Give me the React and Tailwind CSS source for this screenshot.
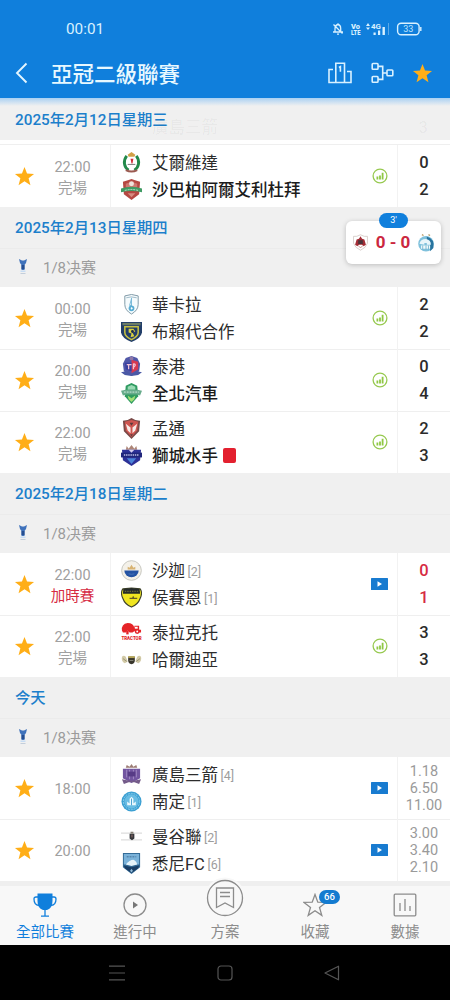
import clsx from "clsx";

const STAR = "M12 1.2l2.9 7.5 8 .4-6.2 5 2.1 7.8-6.8-4.4-6.8 4.4 2.1-7.8-6.2-5 8-.4z";

const crests = {
  alwehdat: (
    <>
      <path d="M7 3h8l3 3v9l-3 4H7l-3-4V6z" fill="#fff" />
      <path d="M6 4C2 9 3 16 8 19M16 4c4 5 3 12-2 15" stroke="#22894a" strokeWidth="3" fill="none" />
      <path d="M7 3l4-3 4 3-1 2H8z" fill="#d2a047" />
      <path d="M10 7h3l-1 5h-1z" fill="#d02c38" />
      <path d="M7 13h8" stroke="#777" />
      <path d="M5 19q6 3 12 0" stroke="#9b5a50" strokeWidth="2" fill="none" />
    </>
  ),
  shabab: (
    <>
      <path d="M2 3l6-2 3-1 3 1 6 2-1 13-8 6-8-6z" fill="#b54842" />
      <path d="M5 5l6-2 6 2v4H5z" fill="#cf7770" />
      <circle cx="11" cy="5" r="2.6" fill="#f0e2dc" />
      <path d="M0 10q11-4 22 0v4q-11-3-22 0z" fill="#3f9b63" />
      <path d="M4 12q7-2 14 0" stroke="#c7e4cf" strokeDasharray="2 1" fill="none" />
      <path d="M7 15h8l-4 4z" fill="#d88a80" />
    </>
  ),
  wakrah: (
    <>
      <path d="M4 2Q11-1 18 2v9q0 6-7 10Q4 17 4 11z" fill="#f5fbfd" stroke="#7d97a5" />
      <path d="M5.5 4q5-2 11 0" stroke="#9eb9c6" fill="none" />
      <path d="M11 4v9M11 5L9 12h2" stroke="#76b8d8" fill="none" />
      <circle cx="11" cy="15" r="3" fill="#58add4" />
      <path d="M10 15l1-1.500 1.500 1.500-1.500 1.500z" fill="#fff" />
    </>
  ),
  buriram: (
    <>
      <path d="M0 1h22v11q-1 6-11 10Q1 18 0 12z" fill="#223e69" />
      <path d="M1.5 2h19v2.5h-19z" fill="#6d7d65" />
      <path d="M4 6h14v6q0 4-7 7.500Q4 16 4 12z" fill="none" stroke="#c6c043" strokeWidth="1.600" />
      <path d="M8 8l5 0 2 3-3 1 2 4-4 1 1-4-3-1z" fill="#d9d140" />
      <circle cx="12" cy="11" r="1.500" fill="#182b4a" />
    </>
  ),
  port: (
    <>
      <path d="M5 2l6-2 6 2 3 6-1 8-8 5-8-5-1-8z" fill="#5158a8" />
      <path d="M11 4l7 2v8l-7 4z" fill="#d73950" />
      <path d="M4 7h7v9l-6-2z" fill="#3b3f9f" />
      <path d="M6 9h5M8 9v5M13 8v6M13 8q4 1 0 4" stroke="#f1c5d7" strokeWidth="1.300" fill="none" />
      <path d="M0 17l5-1 6 3 6-3 5 1-4 3-7 1-7-1z" fill="#4a59a5" />
      <circle cx="11" cy="2.500" r="2" fill="#9078a8" />
    </>
  ),
  jeonbuk: (
    <>
      <path d="M5 3l6-3 6 3 1 11-7 8-7-8z" fill="#2f9b61" />
      <path d="M7 4l4-2 4 2v3H7z" fill="#9adab4" />
      <path d="M0 8l5-1h12l5 1-2 5-4-1H6l-4 1z" fill="#67ab8b" />
      <path d="M3 9.500h16" stroke="#d5eee2" strokeDasharray="2 1" />
      <path d="M7 13l4 3 4-3-1 4-3 3-3-3z" fill="#a2e076" />
    </>
  ),
  muangthong: (
    <>
      <path d="M2 3l5-1 4-2 4 2 5 1-1 11-8 8-8-8z" fill="#7a4a48" />
      <path d="M4 4l7-2 7 2-1 9-6 7-6-7z" fill="#cf5550" />
      <path d="M5 6l5 4v6l-3-3zM17 6l-5 4v6l3-3z" fill="#f8ece8" />
      <path d="M9 5h4l-2 3zM9.500 17h3l-1.500 2z" fill="#5a3c3c" />
    </>
  ),
  lioncity: (
    <>
      <path d="M5 5l1-4 2 3 3-4 3 4 2-3 1 4z" fill="#ad8577" />
      <path d="M1 5h20l-1 11-9 6-9-6z" fill="#2d3197" />
      <path d="M0 8h22v5H0z" fill="#20267b" />
      <path d="M3 10.500h16" stroke="#bdbfe8" strokeWidth="1.500" strokeDasharray="1.500 .8" />
      <path d="M6 14h10l-5 6z" fill="#4b84d9" />
      <path d="M8 5h6l-3 3z" fill="#d6cff0" />
    </>
  ),
  sharjah: (
    <>
      <circle cx="11" cy="11" r="10.300" fill="#f4f1e9" stroke="#c5c5be" />
      <path d="M3.500 11h15a7.500 7 0 0 1-15 0" fill="#2453a3" />
      <path d="M7 10V7l2 1 2-3 2 3 2-1v3z" fill="#d8b372" />
      <path d="M8 14.500q3 1 6 0" stroke="#4773b8" fill="none" />
    </>
  ),
  hussein: (
    <>
      <path d="M2 2l9-1 9 1q3 4 0 10-2 6-9 9-7-3-9-9-3-6 0-10z" fill="#f0e520" stroke="#3e4228" strokeWidth="1.200" />
      <path d="M2.500 2l8.500-1 8.500 1 .5 5H2z" fill="#252b2b" />
      <path d="M4 4.500h14" stroke="#7e7c3b" strokeDasharray="1.500 1" />
      <path d="M9 12h3l1-2v2h4" stroke="#665c24" strokeWidth="1.300" fill="none" />
    </>
  ),
  tractor: (
    <>
      <path d="M1 9q-1-7 6-8 6 0 7 5V4h5v4h2v3h-4l-2-2-3 2H9L7 9l-2 2H2z" fill="#e52428" />
      <path d="M5.500 9h2.500v4H5.500z" fill="#e52428" />
      <circle cx="17" cy="10" r="2.600" fill="#e52428" />
      <circle cx="17" cy="10" r="1" fill="#fff" />
      <path d="M14.500 5h3v2h-3z" fill="#fff" />
      <text x="11" y="18.500" textAnchor="middle" fontSize="5.500" fontWeight="900" textLength="21" lengthAdjust="spacingAndGlyphs" fill="#df1e25">
        TRACTOR
      </text>
    </>
  ),
  khaldiya: (
    <>
      <path d="M1 8q2-2 4 0l2 5-3 2q-4-2-3-7zM21 8q-2-2-4 0l-2 5 3 2q4-2 3-7z" fill="#d3cba8" />
      <path d="M2 10l4 3M20 10l-4 3" stroke="#9c9573" />
      <path d="M7.500 8h7v4q0 3-3.500 4-3.500-1-3.500-4z" fill="#38352b" />
      <path d="M7.500 7.500h7v2h-7z" fill="#b3a456" />
      <path d="M9 12h4" stroke="#88887a" />
    </>
  ),
  hiroshima: (
    <>
      <path d="M5 4l1-3 3 2 2-3 2 3 3-2 1 3z" fill="#9c7c74" />
      <path d="M2 5h18v10l-9 5-9-5z" fill="#7255a0" />
      <path d="M6 6v8M9 6v10M13 6v10M16 6v8" stroke="#a28bc4" />
      <path d="M7 8h8v5H7z" fill="#573b86" />
      <path d="M1 16q10 3 20 0l-2 5-5-2H8l-5 2z" fill="#745b89" />
    </>
  ),
  namdinh: (
    <>
      <circle cx="11" cy="11" r="10.500" fill="#3b9fd2" />
      <circle cx="11" cy="11" r="8.500" fill="none" stroke="#8fd0ec" strokeDasharray="2 1" />
      <circle cx="11" cy="11" r="7.500" fill="#68bce3" />
      <path d="M6.500 15v-4l2.500 2V8l2-2 2 2v5l2.500-2v4z" fill="#edf9fe" />
      <path d="M11 8v7" stroke="#459ed0" />
    </>
  ),
  bangkok: (
    <>
      <path d="M0 7.500h22M0 14.500h22" stroke="#ddd" strokeWidth="1.400" />
      <path d="M9 8h5v5l-2.500 2L9 13z" fill="#35363a" />
      <path d="M10 6h3v2h-3z" fill="#878177" />
      <path d="M11.500 9v3" stroke="#9b7370" />
    </>
  ),
  sydney: (
    <>
      <path d="M2 0h18v15l-9 7-9-7z" fill="#326995" />
      <path d="M3 1h16v11H3z" fill="#7ab2d9" />
      <path d="M6 4h10" stroke="#426f98" strokeDasharray="2 1" />
      <path d="M5 12q4-5 8-5 3 1 4 5l-6 1.500z" fill="#e6f4fb" />
      <path d="M3 13l8 2 8-2-1 3-7 5-7-5z" fill="#193e66" />
      <path d="M11 16.500l1.500 2-1.500 2-1.500-2z" fill="#93bedb" />
    </>
  ),
  rayyan: (
    <>
      <path d="M2 3q4 1 9-2 5 3 9 2v9q-2 6-9 9-7-3-9-9z" fill="#fff" stroke="#cfc5bf" />
      <path d="M4 14l2-7 3-1 2-3 2 3 3 1 2 7-3 2-2-2h-4l-2 2z" fill="#a32c35" />
      <path d="M8 8h6v5H8z" fill="#48343b" />
      <path d="M8 15l3 3 3-3" stroke="#ba7a73" fill="none" />
    </>
  ),
  hilal: (
    <>
      <circle cx="11" cy="12" r="9.500" fill="#80c1dc" />
      <path d="M12 3q10 3 8 14l-4 4V10h-4z" fill="#28749f" />
      <path d="M3 12q1-6 8-6 6 1 6 7h-5v-2H9v2z" fill="#e8f5fa" />
      <path d="M5 14h11v4H5z" fill="#f1fafc" />
      <path d="M7 14v5M11 14v5M14 14v5" stroke="#69aeca" />
      <path d="M6 .8l2 1M14 .8l2 1" stroke="#b89962" strokeWidth="1.500" />
    </>
  ),
};

const sections = [
  {
    matches: [
      { time: "22:00", status: "完場", icon: "stats", score: ["0", "2"], teams: [["alwehdat", "艾爾維達"], ["shabab", "沙巴柏阿爾艾利杜拜", { bold: true }]] },
    ],
  },
  {
    date: "2025年2月13日星期四",
    matches: [
      { time: "00:00", status: "完場", icon: "stats", score: ["2", "2"], teams: [["wakrah", "華卡拉"], ["buriram", "布賴代合作"]] },
      { time: "20:00", status: "完場", icon: "stats", score: ["0", "4"], teams: [["port", "泰港"], ["jeonbuk", "全北汽車", { bold: true }]] },
      { time: "22:00", status: "完場", icon: "stats", score: ["2", "3"], teams: [["muangthong", "孟通"], ["lioncity", "獅城水手", { bold: true, redCard: true }]] },
    ],
  },
  {
    date: "2025年2月18日星期二",
    matches: [
      { time: "22:00", status: "加時賽", live: true, icon: "video", score: ["0", "1"], teams: [["sharjah", "沙迦", { rank: 2 }], ["hussein", "侯賽恩", { rank: 1 }]] },
      { time: "22:00", status: "完場", icon: "stats", score: ["3", "3"], teams: [["tractor", "泰拉克托"], ["khaldiya", "哈爾迪亞"]] },
    ],
  },
  {
    date: "今天",
    matches: [
      { time: "18:00", icon: "video", odds: ["1.18", "6.50", "11.00"], teams: [["hiroshima", "廣島三箭", { rank: 4 }], ["namdinh", "南定", { rank: 1 }]] },
      { time: "20:00", icon: "video", odds: ["3.00", "3.40", "2.10"], teams: [["bangkok", "曼谷聯", { rank: 2 }], ["sydney", "悉尼FC", { rank: 6 }]] },
    ],
  },
];

const Crest = ({ name, className = "size-[21px]" }) => (
  <svg viewBox="0 0 22 22" className={clsx("shrink-0", className)}>
    {crests[name]}
  </svg>
);

const Star = ({ className }) => (
  <svg viewBox="0 0 24 24" className={className}>
    <path d={STAR} fill="#ffae17" />
  </svg>
);

const StatsIcon = () => (
  <svg viewBox="0 0 16 16" className="ml-[2px] size-4">
    <circle cx="8" cy="8" r="6.900" fill="none" stroke="#97c950" strokeWidth="1.300" />
    <path d="M5.400 8.500v3M8 7.500v4M10.600 4.700v6.800" stroke="#8fc843" strokeWidth="1.800" />
  </svg>
);

const VideoIcon = () => (
  <svg viewBox="0 0 17 12" className="h-3 w-[17px]">
    <rect width="17" height="12" rx=".5" fill="#187bd0" />
    <path d="M6.500 3.300L11 6 6.500 8.700z" fill="#fff" />
  </svg>
);

const StatusBar = () => (
  <div className="flex h-[50px] items-start justify-between pl-[66px] pr-[28px] pt-[19px]">
    <span className="text-[15.3px] leading-5 text-[#d9f1ff]">00:01</span>
    <svg width="90" height="20" viewBox="332 19 90 20" fill="none" stroke="#d9f1ff">
      <path d="M333 32h10M335 32v-3q0-4 3-4.500 2.700.5 2.700 4v3.500M338 24.500v-1.200M337 34.200h2M333.500 24.500l9 9" strokeWidth="1.300" />
      <g fill="#d9f1ff" stroke="none" fontWeight="900" fontSize="8">
        <text x="351" y="28.800" textLength="9" lengthAdjust="spacingAndGlyphs">Vo</text>
        <text x="351" y="35.200" fontSize="7.500" textLength="9.500" lengthAdjust="spacingAndGlyphs">LTE</text>
        <text x="371" y="28.800" fontWeight="700" textLength="10" lengthAdjust="spacingAndGlyphs">4G</text>
        <path d="M366 26l2-3 2 3zM366 27.500l2 2.500 2-2.500zM373.500 32.500h2.200v2.500h-2.200zM378 30.500h2.200v4.500h-2.200zM382.500 27h2.400v8h-2.400z" />
      </g>
      <path d="M388.500 23v12" stroke="#5ba7e7" />
      <rect x="397.600" y="23.200" width="21.500" height="11.600" rx="3.500" strokeWidth="1.400" />
      <path d="M420.800 27v4" strokeWidth="1.400" />
      <text x="408.300" y="32.300" textAnchor="middle" fontSize="9" fill="#bfe3fb" stroke="none">33</text>
    </svg>
  </div>
);

const TitleBar = () => (
  <div className="flex h-12 items-center pl-[15px] pr-[17px]">
    <svg width="13" height="22" viewBox="0 0 13 22" fill="none" stroke="#e4f6ff" strokeWidth="1.900" className="-mt-[3px]">
      <path d="M11.500 1.500L2 11l9.500 9.500" />
    </svg>
    <h1 className="ml-[23px] flex-1 pt-[2px] text-[21.5px] font-medium leading-7 text-[#e8f8ff]">亞冠二級聯賽</h1>
    <svg width="24" height="22" viewBox="0 0 24 22" fill="none" stroke="#d9f1ff" strokeWidth="1.600" className="-mt-[2px] mr-[19px]">
      <path d="M5 7.500H1v13h22V9.500h-4M7.800 20.500V1.200h8.700v19.300" />
      <path d="M10.900 5.500l1.500-.8v5" />
    </svg>
    <svg width="23" height="22" viewBox="0 0 23 22" fill="none" stroke="#d9f1ff" strokeWidth="1.600" className="-mt-[2px] mr-[18px]">
      <rect x="1.200" y="1.500" width="5.800" height="5.800" rx=".8" />
      <rect x="1.200" y="14.500" width="5.800" height="5.800" rx=".8" />
      <rect x="16" y="8" width="5.800" height="5.800" rx=".8" />
      <path d="M7 4.400h4.700v13H7M11.700 11H16" />
    </svg>
    <Star className="-mt-[1px] size-[21px]" />
  </div>
);

const DateHeader = ({ date, className = "h-[41px]" }) => (
  <div className={clsx("flex items-center pl-[15px] pt-[2px] text-[15.3px] font-medium text-[#1c7fcb]", className)}>{date}</div>
);

const RoundHeader = () => (
  <div className="flex h-[39px] items-center border-t border-[#ebebeb] pl-[16px] text-[15px] text-[#9b9b9b]">
    <svg width="14" height="18" viewBox="0 0 14 18" className="-mt-[2px] mr-[13px]">
      <path d="M3 1l3 1.500h2L11 1l-1 4-1.500 2v5h-3V7L4 5z" fill="#3f72bb" />
      <path d="M5.500 7h3v4h-3z" fill="#254e91" />
      <path d="M4.500 12.500h5v1.500h-5z" fill="#c6dcf4" />
      <path d="M4.500 15.500h5" stroke="#c3cedb" />
    </svg>
    1/8决赛
  </div>
);

const TeamLine = ({ team }) => {
  const [crest, name, { bold, rank, redCard } = {}] = team;
  return (
    <div className="flex h-[27px] items-center">
      <Crest name={crest} />
      <span className={clsx("ml-[10px] pt-[2px] text-[16.5px] leading-[25px]", bold ? "font-medium text-[#1c1c1c]" : "text-[#2c2c2c]")}>{name}</span>
      {rank && <span className="ml-[2.500px] pt-[2px] text-[12.5px] leading-[25px] text-[#9d9d9d]">[{rank}]</span>}
      {redCard && <span className="ml-[5px] h-[15px] w-[13px] rounded-[2px] bg-[#e3202f]" />}
    </div>
  );
};

const MatchRow = ({ match, first }) => (
  <div className={clsx("flex h-[62px] items-stretch bg-white", !first && "shadow-[inset_0_1px_0_#efefef]")}>
    <div className="flex w-[48px] items-center justify-center">
      <Star className="size-[21px]" />
    </div>
    <div className="flex w-[49px] flex-col items-center justify-center pt-[3px] text-[14.5px] leading-[21px] text-[#a0a0a0]">
      <span>{match.time}</span>
      {match.status && <span className={clsx("whitespace-nowrap", match.live && "text-[#d62b43]")}>{match.status}</span>}
    </div>
    <div className="ml-[13px] flex flex-1 flex-col justify-center border-l border-[#f2f2f2] pl-[10px]">
      {match.teams.map((team) => (
        <TeamLine key={team[0]} team={team} />
      ))}
    </div>
    <div className="flex w-9 items-center justify-center">{match.icon === "stats" ? <StatsIcon /> : <VideoIcon />}</div>
    <div className="flex w-[53px] flex-col items-center justify-center border-l border-[#f2f2f2]">
      {match.odds
        ? match.odds.map((odd) => (
            <span key={odd} className="text-[14.5px] leading-[17px] text-[#9a9a9a]">
              {odd}
            </span>
          ))
        : match.score.map((goals, i) => (
            <span key={i} className={clsx("text-[16.5px] font-medium leading-[27px]", match.live ? "text-[#d62b43]" : "text-[#2b2b2b]")}>
              {goals}
            </span>
          ))}
    </div>
  </div>
);

const LiveScore = () => (
  <div className="absolute left-[346px] top-[213px] h-[51px] w-[95px]">
    <div className="mt-2 flex h-[43px] items-center justify-between rounded-md bg-white px-[6px] shadow-[0_1px_5px_rgba(0,0,0,0.22)]">
      <Crest name="rayyan" className="size-[17px]" />
      <span className="whitespace-nowrap text-[17px] font-bold text-[#cb2740]">0 - 0</span>
      <Crest name="hilal" className="size-[18px]" />
    </div>
    <span className="absolute left-[33px] top-0 flex h-[15px] w-[29px] items-center justify-center rounded-full bg-[#107fdc] text-[9px] text-white">
      3'
    </span>
  </div>
);

const tabs = [
  {
    label: "全部比賽",
    active: true,
    icon: (
      <>
        <path d="M4.500 .5h15V8q0 7-5.500 9h-4q-5.500-2-5.500-9z" fill="#107fdc" stroke="none" />
        <path d="M5 4H3Q1 4 1 6q0 6 5 6.500M19 4h2q2 0 2 2 0 6-5 6.500M12 16v7M8 23.200h8" />
      </>
    ),
  },
  {
    label: "進行中",
    icon: (
      <>
        <circle cx="12" cy="12" r="11" />
        <path d="M10 8.500l5 3.500-5 3.500z" fill="#777" stroke="none" />
      </>
    ),
  },
  { label: "方案", raised: true },
  {
    label: "收藏",
    badge: 66,
    icon: <path d="M12 1.500l2.800 7.700 8.200.2-6.500 5 2.300 8L12 17.800l-6.800 4.600 2.300-8-6.500-5 8.200-.2z" />,
  },
  {
    label: "數據",
    icon: (
      <>
        <rect x="1.200" y="1.200" width="21.600" height="21.600" rx="1" />
        <path d="M7 10v8M12 6v12M17 13v5" />
      </>
    ),
  },
];

const TabBar = () => (
  <nav className="flex h-16 border-t-[5px] border-[#efefef] bg-[#f8f8f8]">
    {tabs.map((tab) => (
      <div key={tab.label} className={clsx("relative flex flex-1 flex-col items-center pt-[7px]", tab.active ? "text-[#107fdc]" : "text-[#8c8c8c]")}>
        {tab.raised ? (
          <svg width="42" height="42" viewBox="0 0 42 42" fill="none" stroke="currentColor" strokeWidth="1.300" className="-mt-[16px] mb-[-2px]">
            <circle cx="21" cy="21" r="20.500" fill="#f8f8f8" stroke="none" />
            <circle cx="21" cy="21" r="17.500" />
            <path d="M12.500 11h17v19.500L21 26l-8.500 4.500zM16 15.500h10M16 19.500h10" />
          </svg>
        ) : (
          <svg width="24" height="24" viewBox="0 0 24 24" fill="none" stroke="currentColor" strokeWidth="1.300">
            {tab.icon}
          </svg>
        )}
        <span className="mt-[5px] text-[14.5px] leading-[21px]">{tab.label}</span>
        {tab.badge && (
          <span className="absolute left-[49px] top-[4px] flex h-[14px] w-[21px] items-center justify-center rounded-full bg-[#147bd0] text-[9.500px] font-medium text-white">
            {tab.badge}
          </span>
        )}
      </div>
    ))}
  </nav>
);

const SystemNav = () => (
  <div className="flex h-[55px] items-center bg-black pl-[109px]">
    <svg width="16" height="16" viewBox="0 0 16 16" stroke="#555" strokeWidth="1.200">
      <path d="M0 1.200h16M0 8h16M0 14.800h16" />
    </svg>
    <svg width="16" height="16" viewBox="0 0 16 16" fill="none" stroke="#555" strokeWidth="1.200" className="ml-[92px]">
      <rect x="1" y="1" width="14" height="14" rx="3" />
    </svg>
    <svg width="16" height="16" viewBox="0 0 16 16" fill="none" stroke="#555" strokeWidth="1.200" className="ml-[91px]">
      <path d="M14.500 1.200v13.600L1 8z" strokeLinejoin="round" />
    </svg>
  </div>
);

export default function App() {
  return (
    <div className="relative h-[1000px] w-[450px] overflow-hidden bg-[#f0f0f0] font-[Roboto,'Noto_Sans_CJK_TC',sans-serif]">
      <header className="h-[98px] bg-[#107fdc]">
        <StatusBar />
        <TitleBar />
      </header>

      {/* Sticky date, with the scrolled row faintly showing through */}
      <div className="relative h-[42px] bg-linear-to-b from-[#a9d0f2] to-[#f0f0f0] to-[8px]">
        <DateHeader date="2025年2月12日星期三" className="h-[42px]" />
        <div className="absolute inset-0 flex items-center overflow-hidden pl-[121px] pr-[22px] pt-[18px] text-[16.5px] font-medium text-black/4">
          <span className="ml-[31px] flex-1">廣島三箭</span>
          <span>3</span>
        </div>
      </div>
      <div className="h-[5px] border-b border-[#efefef] bg-white" />

      {sections.map((section, i) => (
        <section key={i}>
          {section.date && (
            <>
              <DateHeader date={section.date} />
              <RoundHeader />
            </>
          )}
          {section.matches.map((match, j) => (
            <MatchRow key={j} match={match} first={j === 0} />
          ))}
        </section>
      ))}

      <TabBar />
      <SystemNav />
      <LiveScore />
    </div>
  );
}
